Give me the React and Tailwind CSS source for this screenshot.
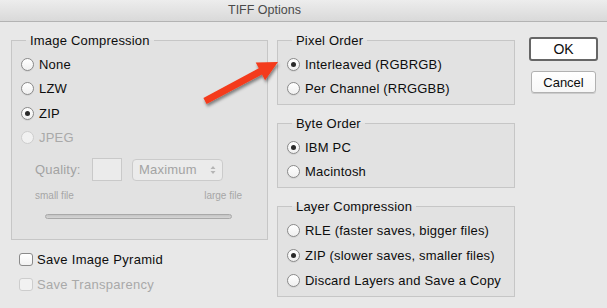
import React from "react";

function Radio({ checked, disabled }) {
  return (
    <span
      className={
        "w-[13px] h-[13px] rounded-full border flex items-center justify-center shrink-0 " +
        (disabled
          ? "border-[#cdcdcd] bg-[#f1f1f1]"
          : "border-[#8a8a8a] bg-gradient-to-b from-white to-[#f0f0f0] shadow-[0_1px_0_rgba(0,0,0,0.06)]")
      }
    >
      {checked && <span className="w-[5px] h-[5px] rounded-full bg-[#2a2a2a]" />}
    </span>
  );
}

function RadioRow({ label, checked, disabled, tall }) {
  return (
    <div className={"flex items-center pl-[9px] gap-[5px] " + (tall ? "h-[25px]" : "h-[24.5px]")}>
      <Radio checked={checked} disabled={disabled} />
      <span className={"tracking-[0.2px] " + (disabled ? "text-[#a9a9a9]" : "text-[#0d0d0d]")}>{label}</span>
    </div>
  );
}

function Group({ title, children, className = "" }) {
  return (
    <fieldset className={"border border-[#c6c6c6] bg-[#e2e2e2] px-0 " + className}>
      <legend className="ml-[14px] px-[4px] leading-[15px] h-[15px] text-[#0d0d0d] tracking-[0.2px]">{title}</legend>
      {children}
    </fieldset>
  );
}

function Check({ label, disabled }) {
  return (
    <div className="flex items-center h-[25px] pl-[8px] gap-[4px]">
      <span
        className={
          "w-[14px] h-[13px] rounded-[3px] border shrink-0 " +
          (disabled ? "border-[#cdcdcd] bg-[#f1f1f1]" : "border-[#8a8a8a] bg-gradient-to-b from-white to-[#f2f2f2]")
        }
      />
      <span className={"tracking-[0.3px] " + (disabled ? "text-[#a9a9a9]" : "text-[#0d0d0d]")}>{label}</span>
    </div>
  );
}

export default function App() {
  return (
    <div className="w-[607px] h-[308px] bg-[#e8e8e8] relative overflow-hidden font-['Liberation_Sans',Arial,sans-serif] text-[13px]">
      <div className="h-[22px] border-b border-[#b3b3b3] bg-gradient-to-b from-[#ededed] to-[#d9d9d9] flex items-center">
        <span className="pl-[228px] text-[#4a4a4a] leading-[21px] text-[12.5px]">TIFF Options</span>
      </div>
      <div className="flex pt-[11px] pl-[11px]">
        <div className="w-[257px] flex flex-col">
          <Group title="Image Compression" className="pt-[4px] pb-[20px]">
            <RadioRow label="None" />
            <RadioRow label="LZW" />
            <RadioRow label="ZIP" checked />
            <RadioRow label="JPEG" disabled />
            <div className="flex items-center mt-[8px] h-[23px] pl-[23px] text-[#a3a3a3] tracking-[0.2px]">
              <span className="w-[57px]">Quality:</span>
              <span className="w-[30px] h-[23px] border border-[#c9c9c9] bg-[#ebebeb]" />
              <div className="ml-[10px] w-[91px] h-[22px] rounded-[4px] border border-[#cbcbcb] bg-[#ebebeb] flex items-center pl-[6px] pr-[6px] justify-between">
                <span>Maximum</span>
                <svg width="6" height="10" viewBox="0 0 6 10">
                  <path d="M0.5 4 L3 1 L5.5 4 Z M0.5 6 L3 9 L5.5 6 Z" fill="#b5b5b5" />
                </svg>
              </div>
            </div>
            <div className="flex justify-between mt-[9px] pl-[23px] pr-[25px] text-[10px] leading-[12px] text-[#a6a6a6]">
              <span>small file</span>
              <span>large file</span>
            </div>
            <div className="ml-[33px] mt-[12px] w-[187px] h-[5px] rounded-full border border-[#a9a9a9] bg-gradient-to-b from-[#c4c4c4] to-[#d6d6d6]" />
          </Group>
          <div className="mt-[7px]">
            <Check label="Save Image Pyramid" />
            <Check label="Save Transparency" disabled />
          </div>
        </div>
        <div className="ml-[9px] w-[238px] flex flex-col">
          <Group title="Pixel Order" className="pt-[4px] pb-[3px]">
            <RadioRow label="Interleaved (RGBRGB)" checked />
            <RadioRow label="Per Channel (RRGGBB)" />
          </Group>
          <Group title="Byte Order" className="pt-[4px] pb-[3px] mt-[11px]">
            <RadioRow label="IBM PC" checked />
            <RadioRow label="Macintosh" />
          </Group>
          <Group title="Layer Compression" className="pt-[4px] pb-[3px] mt-[11px]">
            <RadioRow label="RLE (faster saves, bigger files)" tall />
            <RadioRow label="ZIP (slower saves, smaller files)" checked tall />
            <RadioRow label="Discard Layers and Save a Copy" tall />
          </Group>
        </div>
        <div className="ml-[14px] pt-[4px] flex flex-col items-center">
          <button className="w-[69px] h-[24px] rounded-[3px] border-2 border-[#666] bg-white text-[#0d0d0d] text-[14px] leading-none">
            OK
          </button>
          <button className="mt-[10px] w-[65px] h-[22px] rounded-[3px] border border-[#b1b1b1] bg-gradient-to-b from-white to-[#f7f7f7] shadow-[0_1px_0_rgba(0,0,0,0.12)] text-[#0d0d0d] text-[13px] leading-none">
            Cancel
          </button>
        </div>
      </div>
      <svg className="absolute left-0 top-0 pointer-events-none" width="607" height="308" viewBox="0 0 607 308">
        <defs>
          <filter id="sh" x="-20%" y="-20%" width="140%" height="160%">
            <feDropShadow dx="1" dy="2.5" stdDeviation="1.6" floodColor="#000" floodOpacity="0.45" />
          </filter>
        </defs>
        <polygon
          points="203.4,97.9 258.8,68.3 255.7,62.6 278,62 265.1,80.2 262,74.5 206.6,104.1"
          fill="#f43b1b"
          filter="url(#sh)"
        />
      </svg>
    </div>
  );
}
